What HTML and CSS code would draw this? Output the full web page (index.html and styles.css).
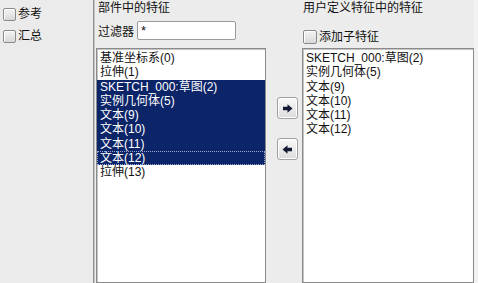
FILE: index.html
```html
<!DOCTYPE html>
<html>
<head>
<meta charset="utf-8">
<link rel="stylesheet" href="styles.css">
</head>
<body>
<div class="app">
  <aside class="sidebar">
    <label class="check"><span class="box"></span>参考</label>
    <label class="check"><span class="box"></span>汇总</label>
  </aside>
  <section class="pane pane-left">
    <div class="title">部件中的特征</div>
    <div class="filter">
      <span class="filter-label">过滤器</span>
      <span class="input">*</span>
    </div>
    <ul class="list">
      <li>基准坐标系(0)</li>
      <li>拉伸(1)</li>
      <li class="sel">SKETCH_000:草图(2)</li>
      <li class="sel">实例几何体(5)</li>
      <li class="sel">文本(9)</li>
      <li class="sel">文本(10)</li>
      <li class="sel">文本(11)</li>
      <li class="sel focus">文本(12)</li>
      <li>拉伸(13)</li>
    </ul>
  </section>
  <div class="mid">
    <button class="arrow arrow-add"><svg width="11" height="9" viewBox="0 0 11 9"><path d="M1 2.8h4.5V0.3L10.5 4.5 5.5 8.7V6.2H1z" fill="#141a33"/></svg></button>
    <button class="arrow arrow-remove"><svg width="11" height="9" viewBox="0 0 11 9"><path d="M10 2.8H5.5V0.3L0.5 4.5 5.5 8.7V6.2H10z" fill="#141a33"/></svg></button>
  </div>
  <section class="pane pane-right">
    <div class="title">用户定义特征中的特征</div>
    <label class="check check-child"><span class="box"></span>添加子特征</label>
    <ul class="list">
      <li>SKETCH_000:草图(2)</li>
      <li>实例几何体(5)</li>
      <li>文本(9)</li>
      <li>文本(10)</li>
      <li>文本(11)</li>
      <li>文本(12)</li>
    </ul>
  </section>
  <div class="rest"></div>
</div>
</body>
</html>
```

FILE: styles.css
```css
html, body {
  margin: 0;
  padding: 0;
  width: 478px;
  height: 283px;
  overflow: hidden;
  background: #ececec;
  font-family: "Liberation Sans", "Noto Sans CJK SC", sans-serif;
  font-size: 12px;
  color: #111;
}

.app {
  display: flex;
  height: 283px;
}

.sidebar {
  width: 94px;
  flex: none;
  background: #ebebeb;
  border-right: 1px solid #8e8e8e;
  display: flex;
  flex-direction: column;
  gap: 8px;
  padding: 7px 0 0 3px;
  box-sizing: border-box;
}

.check {
  display: flex;
  align-items: center;
  gap: 2px;
  height: 14px;
  line-height: 14px;
}

.box {
  width: 11px;
  height: 11px;
  border: 1px solid #8a8a8a;
  border-radius: 2px;
  background: linear-gradient(#f4f4f4, #d8d8d8);
  box-shadow: inset 1px 1px 0 #ffffff;
}

.pane {
  display: flex;
  flex-direction: column;
  flex: none;
}

.pane-left {
  width: 170px;
  padding-left: 1px;
  border-left: 1px solid #c8c8c8;
}

.pane-right {
  width: 172px;
}

.title {
  height: 16px;
  line-height: 14px;
  padding: 1px 0 0 2px;
}

.pane-right .title {
  padding-left: 1px;
}

.filter {
  display: flex;
  align-items: center;
  height: 20px;
  margin-top: 3px;
  padding-left: 2px;
}

.filter-label {
  width: 39px;
}

.input {
  width: 94px;
  height: 17px;
  line-height: 17px;
  background: #fff;
  border: 1px solid #9a9a9a;
  border-radius: 2px;
  padding-left: 3px;
  box-sizing: content-box;
  font-size: 13px;
}

.list {
  list-style: none;
  margin: 8px 0 0 0;
  padding: 2px 0 0 0;
  flex: 1;
  background: #fff;
  border: 1px solid #8a8a8a;
  box-shadow: inset 1px 1px 0 #c4c4c4;
}

.list li {
  height: 14.3px;
  line-height: 14px;
  padding-left: 3px;
  white-space: nowrap;
}

.list li.sel {
  background: #0c2468;
  color: #fff;
}

.list li.focus {
  outline: 1px dotted #9aa8d0;
  outline-offset: -1px;
}

.check-child {
  margin: 12px 0 0 1px;
  height: 16px;
}

.check-child .box {
  width: 12px;
  height: 12px;
}

.pane-right .list {
  margin-top: 3px;
}

.mid {
  width: 36px;
  flex: none;
  display: flex;
  flex-direction: column;
  padding: 97px 0 0 11px;
  box-sizing: border-box;
  gap: 19px;
}

.arrow {
  width: 21px;
  height: 22px;
  padding: 0;
  margin: 0;
  border: 1px solid #a0a0a0;
  border-radius: 3px;
  background: linear-gradient(#fafafa, #dcdcdc);
  box-shadow: inset 0 0 0 1px #ffffff;
  display: flex;
  align-items: center;
  justify-content: center;
}

.rest {
  flex: 1;
  background: #f2f2f2;
}
```
